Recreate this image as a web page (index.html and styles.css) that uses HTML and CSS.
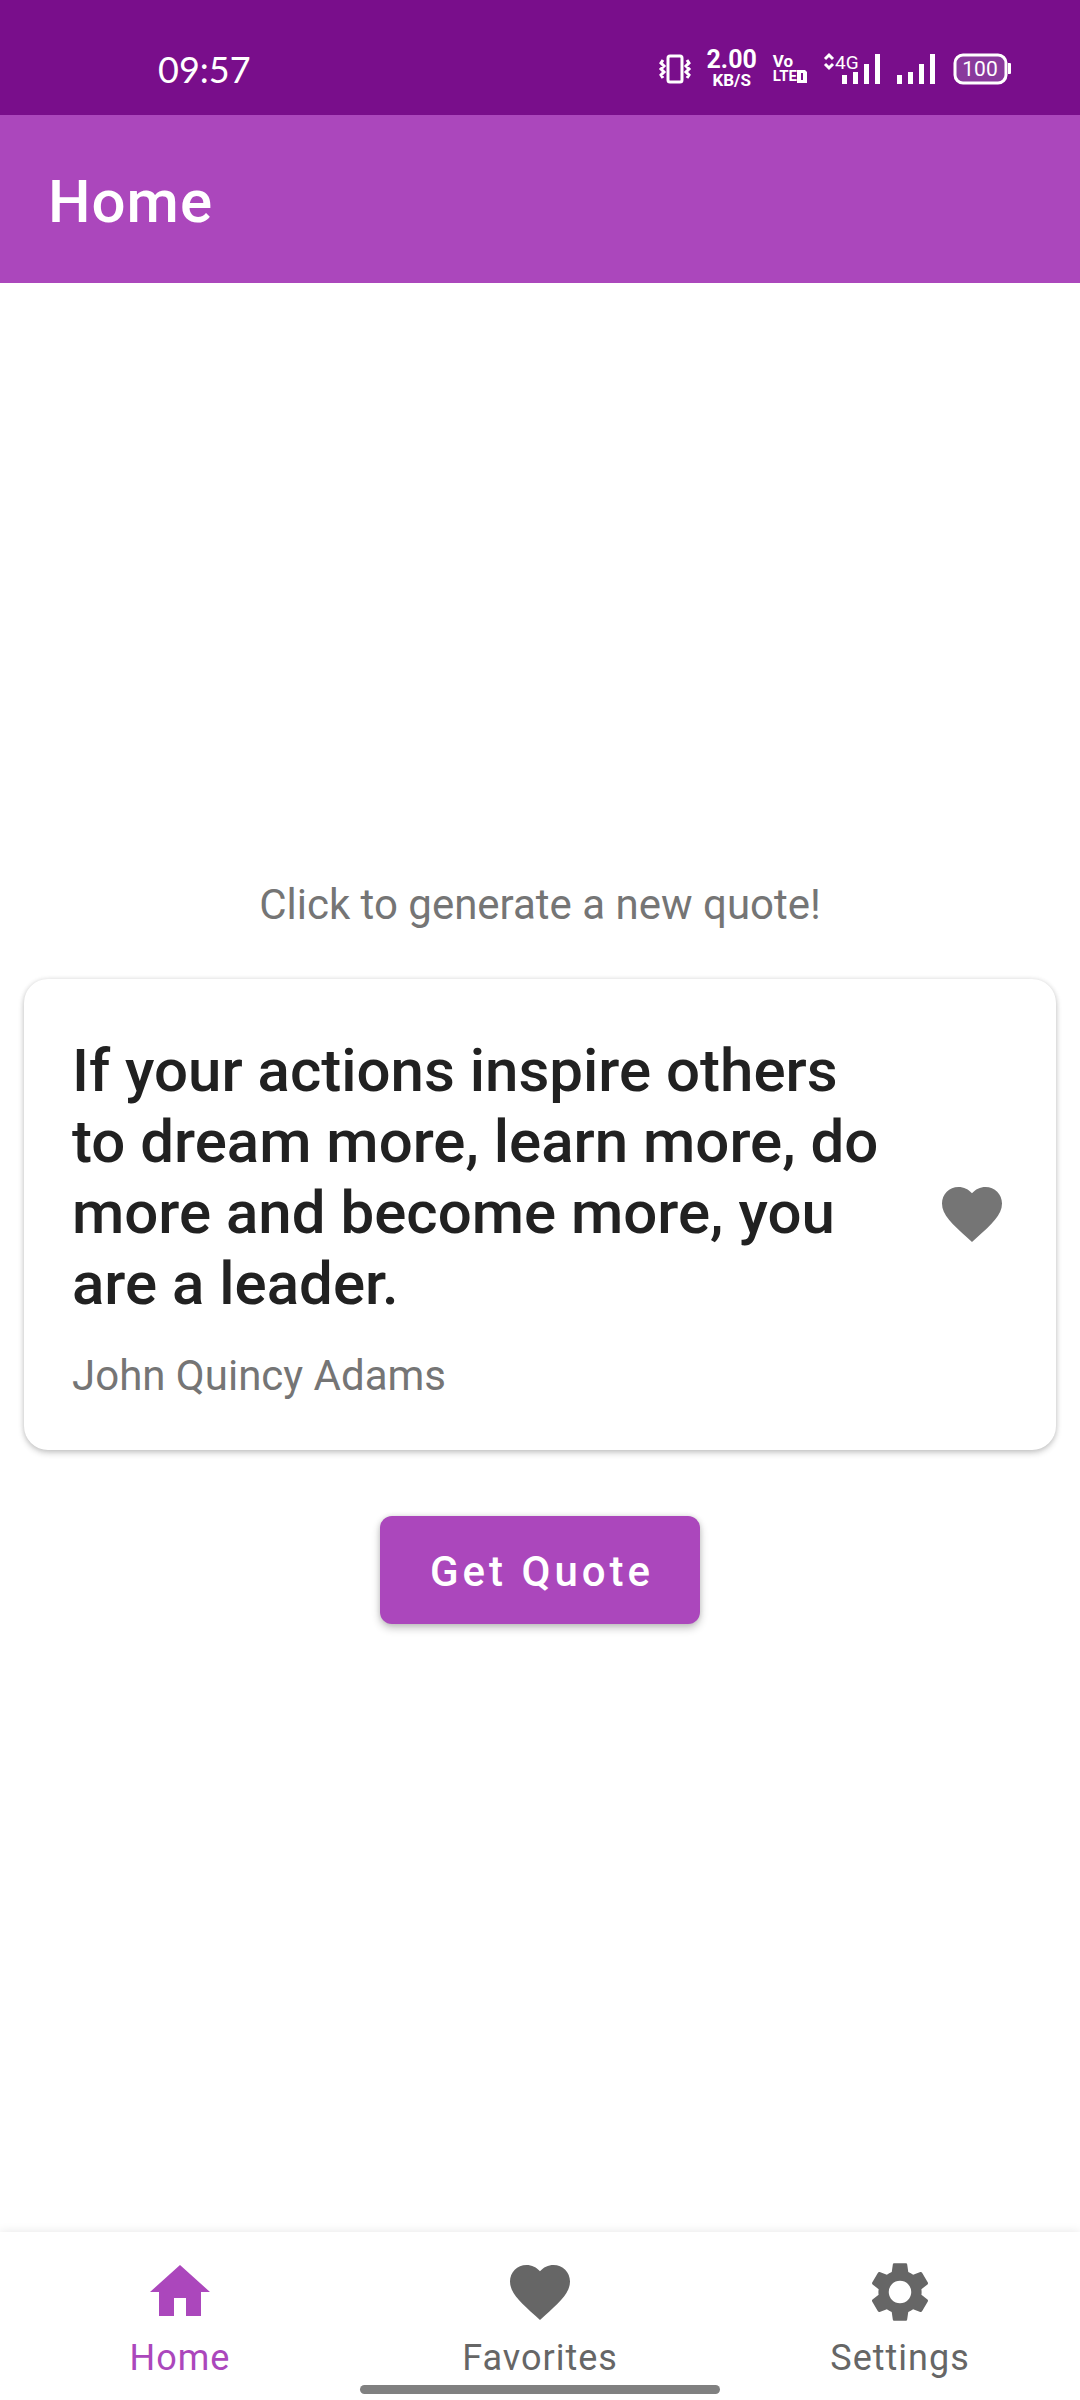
FILE: index.html
```html
<!DOCTYPE html>
<html lang="en">
<head>
<meta charset="utf-8">
<meta name="viewport" content="width=device-width, initial-scale=1">
<title>Home</title>
<link rel="stylesheet" href="styles.css">
</head>
<body>
<div class="status-bar">
  <span class="clock">09:57</span>
  <div class="status-icons">
    <svg class="vibrate" width="32" height="32" viewBox="0 0 32 32" aria-hidden="true">
      <rect x="9" y="3" width="14" height="26" rx="2"/>
      <path d="M4 7l-2 3 3 3-3 3 3 3-3 3 2 3M28 7l2 3-3 3 3 3-3 3 3 3-2 3"/>
    </svg>
    <div class="net-speed"><span class="speed-value">2.00</span><span class="speed-unit">KB/S</span></div>
    <div class="volte">
      <span class="vo">Vo</span>
      <span class="lte">LTE<svg width="10" height="13" viewBox="0 0 10 13" aria-hidden="true"><path fill="#fff" fill-rule="evenodd" d="M0 0h8l2 2v11H0zM4 3v7h2V3z"/></svg></span>
    </div>
    <svg class="signal" width="58" height="32" viewBox="0 0 58 32" aria-label="4G signal">
      <path class="arrows" d="M2 6l4-4 4 4M2 11l4 4 4-4"/>
      <text x="12" y="16">4G</text>
      <path d="M19 22h5v9h-5zM30 19h5v12h-5zM41 11h5v20h-5zM52 1h5v30h-5z"/>
    </svg>
    <svg class="signal" width="40" height="32" viewBox="0 0 40 32" aria-label="Signal">
      <path d="M0 22h5v9H0zM11 19h5v12h-5zM22 11h5v20h-5zM33 1h5v30h-5z"/>
    </svg>
    <svg class="battery" width="58" height="32" viewBox="0 0 58 32" aria-label="Battery">
      <rect x="2" y="2" width="51" height="28" rx="8"/>
      <path d="M55 10h2q1 0 1 1v9q0 1-1 1h-2z"/>
      <text x="27" y="23" text-anchor="middle">100</text>
    </svg>
  </div>
</div>
<header class="app-bar"><h1>Home</h1></header>
<main class="content">
  <p class="hint">Click to generate a new quote!</p>
  <article class="card">
    <div class="card-text">
      <h2>If your actions inspire others to dream more, learn more, do more and become more, you are a leader.</h2>
      <p>John Quincy Adams</p>
    </div>
    <button class="like" type="button" aria-label="Add to favorites">
      <svg class="icon" viewBox="0 0 24 24"><path d="M12 21.35l-1.45-1.32C5.4 15.36 2 12.28 2 8.5 2 5.42 4.42 3 7.5 3c1.74 0 3.41.81 4.5 2.09C13.09 3.81 14.76 3 16.5 3 19.58 3 22 5.42 22 8.5c0 3.78-3.4 6.86-8.55 11.54L12 21.35z"/></svg>
    </button>
  </article>
  <button class="get-quote" type="button">Get Quote</button>
</main>
<nav class="bottom-nav">
  <a class="active" href="#home">
    <svg class="icon" viewBox="0 0 24 24"><path d="M10 20v-6h4v6h5v-8h3L12 3 2 12h3v8z"/></svg>
    <span>Home</span>
  </a>
  <a href="#favorites">
    <svg class="icon" viewBox="0 0 24 24"><path d="M12 21.35l-1.45-1.32C5.4 15.36 2 12.28 2 8.5 2 5.42 4.42 3 7.5 3c1.74 0 3.41.81 4.5 2.09C13.09 3.81 14.76 3 16.5 3 19.58 3 22 5.42 22 8.5c0 3.78-3.4 6.86-8.55 11.54L12 21.35z"/></svg>
    <span>Favorites</span>
  </a>
  <a href="#settings">
    <svg class="icon" viewBox="0 0 24 24"><path d="M19.14 12.94c.04-.3.06-.61.06-.94 0-.32-.02-.64-.07-.94l2.03-1.58c.18-.14.23-.41.12-.61l-1.92-3.32c-.12-.22-.37-.29-.59-.22l-2.39.96c-.5-.38-1.03-.7-1.62-.94l-.36-2.54c-.04-.24-.24-.41-.48-.41h-3.84c-.24 0-.43.17-.47.41l-.36 2.54c-.59.24-1.13.57-1.62.94l-2.39-.96c-.22-.08-.47 0-.59.22L2.74 8.87c-.12.21-.08.47.12.61l2.03 1.58c-.05.3-.09.63-.09.94s.02.64.07.94l-2.03 1.58c-.18.14-.23.41-.12.61l1.92 3.32c.12.22.37.29.59.22l2.39-.96c.5.38 1.03.7 1.62.94l.36 2.54c.05.24.24.41.48.41h3.84c.24 0 .44-.17.47-.41l.36-2.54c.59-.24 1.13-.56 1.62-.94l2.39.96c.22.08.47 0 .59-.22l1.92-3.32c.12-.22.07-.47-.12-.61l-2.01-1.58zM12 15.75a3.75 3.75 0 1 1 0-7.5 3.75 3.75 0 0 1 0 7.5z"/></svg>
    <span>Settings</span>
  </a>
  <div class="gesture-bar"></div>
</nav>
</body>
</html>
```
FILE: styles.css
```css
* {
  box-sizing: border-box;
}

body {
  margin: 0;
  min-height: 100vh;
  display: flex;
  flex-direction: column;
  background: #fff;
  font-family: Roboto, "Liberation Sans", sans-serif;
}

h1, h2, p {
  margin: 0;
}

button {
  border: 0;
  font-family: inherit;
  cursor: pointer;
}

.status-bar {
  display: flex;
  justify-content: space-between;
  align-items: center;
  height: 115px;
  padding: 50px 69px 27px 158px;
  background: #790e8b;
  color: #fff;
}

.clock {
  font-family: Lato, sans-serif;
  font-size: 36px;
  line-height: 36px;
}

.status-icons {
  display: flex;
  align-items: center;
  gap: 16px;
}

.status-icons svg {
  overflow: visible;
}

.vibrate {
  fill: none;
  stroke: #fff;
  stroke-width: 3;
}

.net-speed {
  display: flex;
  flex-direction: column;
  align-items: center;
  font-weight: 700;
}

.speed-value {
  font-size: 25px;
  line-height: 22px;
}

.speed-unit {
  font-size: 17px;
  line-height: 18px;
}

.volte {
  display: flex;
  flex-direction: column;
  font-weight: 700;
}

.vo {
  font-size: 17px;
  line-height: 15px;
}

.lte {
  display: flex;
  align-items: center;
  font-size: 15px;
  line-height: 15px;
}

.signal {
  fill: #fff;
}

.signal text {
  font-size: 19px;
  font-weight: 400;
}

.arrows {
  fill: none;
  stroke: #fff;
  stroke-width: 3;
}

.battery {
  fill: #fff;
}

.battery rect {
  fill: #893a9c;
  stroke: #fff;
  stroke-width: 3;
}

.battery text {
  font-size: 21px;
  font-weight: 400;
}

.app-bar {
  display: flex;
  align-items: center;
  height: 168px;
  padding: 6px 48px 0;
  background: #ab47bc;
  color: #fff;
}

.app-bar h1 {
  font-size: 60px;
  line-height: 72px;
  font-weight: 500;
  letter-spacing: 1px;
}

.content {
  flex: 1;
  display: flex;
  flex-direction: column;
  align-items: center;
  justify-content: center;
  padding: 0 24px 12px;
}

.hint,
.card-text p {
  font-size: 42px;
  line-height: 49px;
  color: #757575;
}

.card {
  display: flex;
  align-items: center;
  align-self: stretch;
  gap: 48px;
  margin: 50px 0 66px;
  padding: 56px 48px 50px;
  border-radius: 24px;
  background: #fff;
  box-shadow: 0 3px 6px rgba(0, 0, 0, 0.2), 0 0 5px rgba(0, 0, 0, 0.1);
}

.card-text {
  flex: 1;
}

.card-text h2 {
  margin-bottom: 32px;
  font-size: 60px;
  line-height: 71px;
  font-weight: 500;
  color: #212121;
}

.like {
  padding: 0 0 6px;
  background: none;
  color: #757575;
}

.icon {
  display: block;
  width: 72px;
  height: 72px;
  fill: currentColor;
}

.get-quote {
  height: 108px;
  padding: 3px 46px 0 50px;
  border-radius: 12px;
  background: #ab47bc;
  color: #fff;
  font-size: 42px;
  font-weight: 500;
  letter-spacing: 4px;
  box-shadow: 0 4px 8px rgba(0, 0, 0, 0.24), 0 0 5px rgba(0, 0, 0, 0.1);
}

.bottom-nav {
  position: relative;
  display: grid;
  grid-template-columns: repeat(3, 1fr);
  height: 168px;
  padding-top: 24px;
  background: #fff;
  box-shadow: 0 0 10px rgba(0, 0, 0, 0.1);
}

.bottom-nav a {
  display: flex;
  flex-direction: column;
  align-items: center;
  gap: 9px;
  color: #666;
  font-size: 36px;
  line-height: 42px;
  letter-spacing: 1px;
  text-decoration: none;
}

.bottom-nav .active {
  color: #ab47bc;
}

/* system gesture handle, drawn over the navigation */
.gesture-bar {
  position: absolute;
  left: 0;
  right: 0;
  bottom: 6px;
  width: 360px;
  height: 9px;
  margin: 0 auto;
  border-radius: 5px;
  background: #808080;
}
```
